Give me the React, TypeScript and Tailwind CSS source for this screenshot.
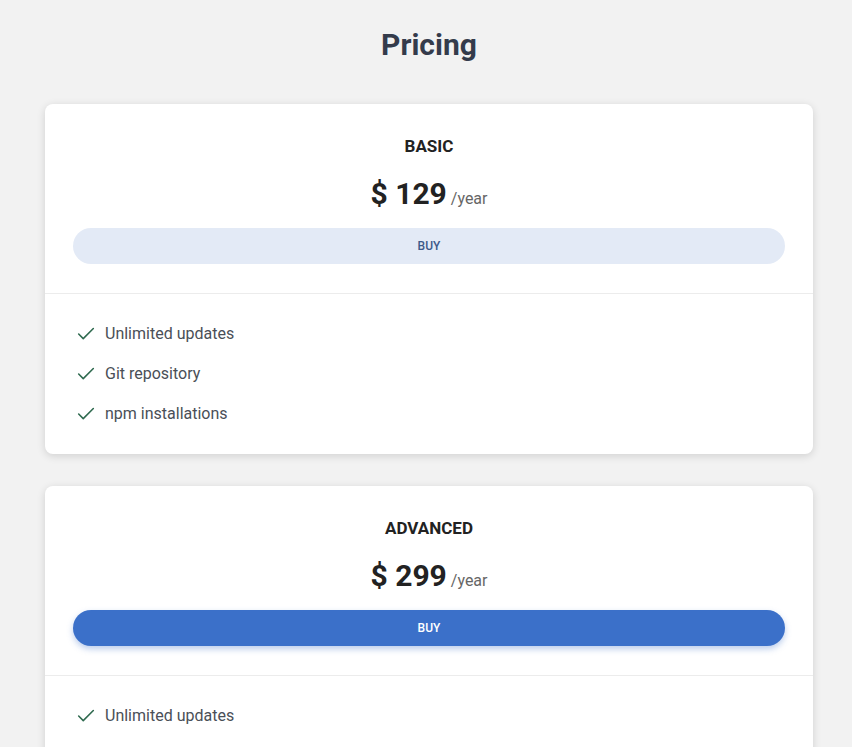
import { Check } from "lucide-react";

type Plan = {
  name: string;
  price: number;
  featured?: boolean;
  features: string[];
};

const plans: Plan[] = [
  { name: "BASIC", price: 129, features: ["Unlimited updates", "Git repository", "npm installations"] },
  { name: "ADVANCED", price: 299, featured: true, features: ["Unlimited updates", "Git repository", "npm installations"] },
];

const PlanCard = ({ plan }: { plan: Plan }) => (
  <div className="bg-white rounded-lg shadow-[0_2px_8px_rgba(0,0,0,0.14)]">
    <div className="px-7 pt-7 pb-[29px] flex flex-col items-center border-b border-[#ececec]">
      <h2 className="text-[17px] leading-7 font-bold text-[#222]">{plan.name}</h2>
      <div className="mt-4 flex items-baseline h-9">
        <span className="text-[30px] leading-9 font-bold text-[#222]">$ {plan.price}</span>
        <span className="ml-1 text-base text-[#666]">/year</span>
      </div>
      <button
        className={
          plan.featured
            ? "mt-4 w-full h-9 rounded-full bg-[#3b70c9] text-white text-xs font-medium shadow-[0_3px_6px_rgba(59,112,201,0.35)]"
            : "mt-4 w-full h-9 rounded-full bg-[#e3eaf6] text-[#3d5a8a] text-xs font-medium"
        }
      >
        BUY
      </button>
    </div>
    <ul className="px-7 py-7 flex flex-col gap-4">
      {plan.features.map((f) => (
        <li key={f} className="flex items-center h-6 pl-[2px] text-base text-[#4a4f57]">
          <Check className="w-[22px] h-[22px] text-[#2f6a4f]" strokeWidth={1.7} />
          <span className="ml-[8px]">{f}</span>
        </li>
      ))}
    </ul>
  </div>
);

export default function App() {
  return (
    <div className="min-h-screen bg-[#f2f2f2] pt-[27px] pb-10 font-['Roboto',sans-serif]">
      <h1 className="ml-[45px] w-[768px] text-center text-[30px] leading-9 font-bold text-[#343b4b]">Pricing</h1>
      <div className="ml-[45px] w-[768px] mt-[41px] flex flex-col gap-8">
        {plans.map((p) => (
          <PlanCard key={p.name} plan={p} />
        ))}
      </div>
    </div>
  );
}
